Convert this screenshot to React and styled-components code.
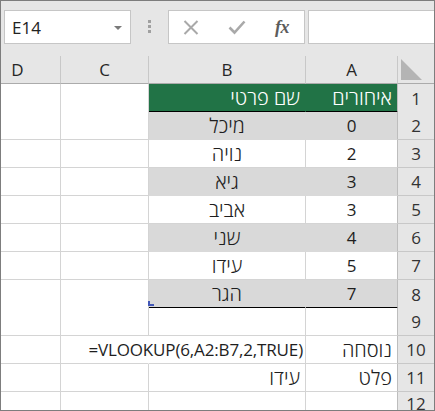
import React from "react";
import styled, { createGlobalStyle } from "styled-components";

const GlobalStyle = createGlobalStyle`
  html, body { margin: 0; padding: 0; background: #ffffff; }
  *, *::before, *::after { box-sizing: border-box; }
`;

const FONT = `"Open Sans", "Noto Sans", "DejaVu Sans", sans-serif`;

const Frame = styled.div`
  width: 435px;
  height: 411px;
  border: 1px solid #7d7d7d;
  overflow: hidden;
  background: #ffffff;
  font-family: ${FONT};
  color: #222;
`;

const Toolbar = styled.div`
  height: 55px;
  background: #e6e6e6;
  display: flex;
  align-items: flex-start;
  padding: 9px 0 0 3px;
`;

const NameBox = styled.div`
  width: 127px;
  height: 34px;
  flex: none;
  background: #fff;
  border: 1px solid #c6c6c6;
  display: flex;
  align-items: center;
  justify-content: space-between;
  padding: 0 8px 0 7px;
  font-size: 17px;
  color: #222;
`;

const DropArrow = styled.span`
  width: 0;
  height: 0;
  border-left: 4px solid transparent;
  border-right: 4px solid transparent;
  border-top: 4px solid #7a7a7a;
  margin-top: 1px;
`;

const Grip = styled.div`
  flex: none;
  margin: 10px 17px 0 17px;
  display: flex;
  flex-direction: column;
  gap: 2px;
`;

const GripDot = styled.span`
  width: 3px;
  height: 3px;
  background: #a0a0a0;
`;

const FormulaButtons = styled.div`
  width: 137px;
  height: 34px;
  flex: none;
  background: #fff;
  border: 1px solid #c6c6c6;
  display: flex;
  align-items: center;
  padding-left: 14px;
`;

const IconSlot = styled.span`
  display: flex;
  align-items: center;
  justify-content: center;
  width: ${(p) => p.$w}px;
  margin-right: ${(p) => p.$mr || 0}px;
`;

const Fx = styled.span`
  font-family: "Liberation Serif", "DejaVu Serif", serif;
  font-style: italic;
  font-weight: bold;
  font-size: 18px;
  color: #5c5c5c;
  letter-spacing: -0.5px;
`;

const FormulaInput = styled.div`
  flex: 1;
  height: 34px;
  margin: 0 -4px 0 3px;
  background: #fff;
  border: 1px solid #c6c6c6;
`;

const COLS = "60px 88px 157px 92px 36px";

const Row = styled.div`
  display: grid;
  grid-template-columns: ${COLS};
  height: ${(p) => p.$h || 28}px;
`;

const ColHead = styled.div`
  background: #e6e6e6;
  border-right: 1px solid #c8c8c8;
  border-bottom: 1px solid #ababab;
  display: flex;
  align-items: center;
  justify-content: center;
  padding-right: ${(p) => p.$pr || 0}px;
  font-size: 17px;
  color: #262626;
`;

const Corner = styled.div`
  background: #e6e6e6;
  border-bottom: 1px solid #ababab;
  display: flex;
  align-items: flex-end;
  padding: 0 0 3px 3px;
`;

const Cell = styled.div`
  position: relative;
  display: flex;
  align-items: center;
  white-space: nowrap;
  font-size: 17px;
  padding: 0 ${(p) => p.$pr ?? 5}px 0 5px;
  justify-content: ${(p) =>
    p.$align === "center" ? "center" : p.$align === "right" ? "flex-end" : "flex-start"};
  background: ${(p) =>
    p.$fill === "green" ? "#217346" : p.$fill === "gray" ? "#d9d9d9" : "#ffffff"};
  color: ${(p) => (p.$fill === "green" ? "#ffffff" : "#1e1e1e")};
  border-right: 1px solid
    ${(p) => (p.$edge ? "#bdbdbd" : p.$fill || p.$open ? "transparent" : "#d4d4d4")};
  border-bottom: ${(p) =>
    p.$thick ? "2px solid #000000" : `1px solid ${p.$fill ? "transparent" : "#d4d4d4"}`};
`;

const CellText = styled.span`
  direction: ${(p) => (p.$he ? "rtl" : "ltr")};
  unicode-bidi: isolate;
  font-size: ${(p) => (p.$he ? 20 : 17)}px;
  font-weight: ${(p) => (p.$he ? 300 : 400)};
  letter-spacing: ${(p) => (p.$he ? 0 : -0.15)}px;
`;

const RowHead = styled.div`
  background: #e6e6e6;
  border-bottom: 1px solid #c8c8c8;
  display: flex;
  align-items: center;
  justify-content: center;
  font-size: 17px;
  color: #333;
`;

const Handle = styled.svg`
  position: absolute;
  left: -1px;
  bottom: 0px;
`;

const isHebrew = (s) => /[\u0590-\u05FF]/.test(s || "");

const rows = [
  { n: 1, a: "איחורים", b: "שם פרטי", fill: "green", align: "right", thick: true },
  { n: 2, a: "0", b: "מיכל", fill: "gray", align: "center" },
  { n: 3, a: "2", b: "נויה", align: "center" },
  { n: 4, a: "3", b: "גיא", fill: "gray", align: "center" },
  { n: 5, a: "3", b: "אביב", align: "center" },
  { n: 6, a: "4", b: "שני", fill: "gray", align: "center" },
  { n: 7, a: "5", b: "עידו", align: "center" },
  { n: 8, a: "7", b: "הגר", fill: "gray", align: "center", thick: true, handle: true },
  { n: 9 },
  { n: 10, a: "נוסחה", b: "=VLOOKUP(6,A2:B7,2,TRUE)", ltr: true, align: "right", overflow: true },
  { n: 11, a: "פלט", b: "עידו", align: "right" },
  { n: 12 },
];

function XIcon() {
  return (
    <svg width="16" height="15" viewBox="0 0 16 15">
      <path d="M1.5 1 L14.5 14 M14.5 1 L1.5 14" stroke="#a9a9a9" strokeWidth="2" fill="none" />
    </svg>
  );
}

function CheckIcon() {
  return (
    <svg width="18" height="15" viewBox="0 0 18 15">
      <path d="M1.5 7.5 L6.5 12.5 L16.5 1.5" stroke="#a9a9a9" strokeWidth="2.6" fill="none" />
    </svg>
  );
}

export default function App() {
  return (
    <>
      <GlobalStyle />
      <Frame>
        <Toolbar>
          <NameBox>
            <span>E14</span>
            <DropArrow />
          </NameBox>
          <Grip>
            <GripDot />
            <GripDot />
            <GripDot />
          </Grip>
          <FormulaButtons>
            <IconSlot $w={16} $mr={29}>
              <XIcon />
            </IconSlot>
            <IconSlot $w={18} $mr={27}>
              <CheckIcon />
            </IconSlot>
            <IconSlot $w={18}>
              <Fx>fx</Fx>
            </IconSlot>
          </FormulaButtons>
          <FormulaInput />
        </Toolbar>

        <Row>
          <ColHead $pr={26}>D</ColHead>
          <ColHead>C</ColHead>
          <ColHead>B</ColHead>
          <ColHead>A</ColHead>
          <Corner>
            <svg width="21" height="21" viewBox="0 0 21 21">
              <polygon points="0,0 0,21 21,21" fill="#b4b4b4" />
            </svg>
          </Corner>
        </Row>

        {rows.map((r) => (
          <Row key={r.n} $h={r.n === 12 ? 20 : 28}>
            <Cell />
            <Cell $open={r.overflow} />
            <Cell $fill={r.fill} $align={r.align} $thick={r.thick} $pr={r.ltr ? 2 : 5}>
              {r.b && <CellText $he={isHebrew(r.b)}>{r.b}</CellText>}
              {r.handle && (
                <Handle width="6" height="6" viewBox="0 0 6 6">
                  <path d="M0 0 H2 V3 H6 V5 H0 Z" fill="#4358b8" />
                </Handle>
              )}
            </Cell>
            <Cell
              $fill={r.fill}
              $align={r.n >= 10 || r.n === 1 ? "right" : "center"}
              $thick={r.thick}
              $edge
            >
              {r.a && <CellText $he={isHebrew(r.a)}>{r.a}</CellText>}
            </Cell>
            <RowHead>{r.n}</RowHead>
          </Row>
        ))}
      </Frame>
    </>
  );
}
